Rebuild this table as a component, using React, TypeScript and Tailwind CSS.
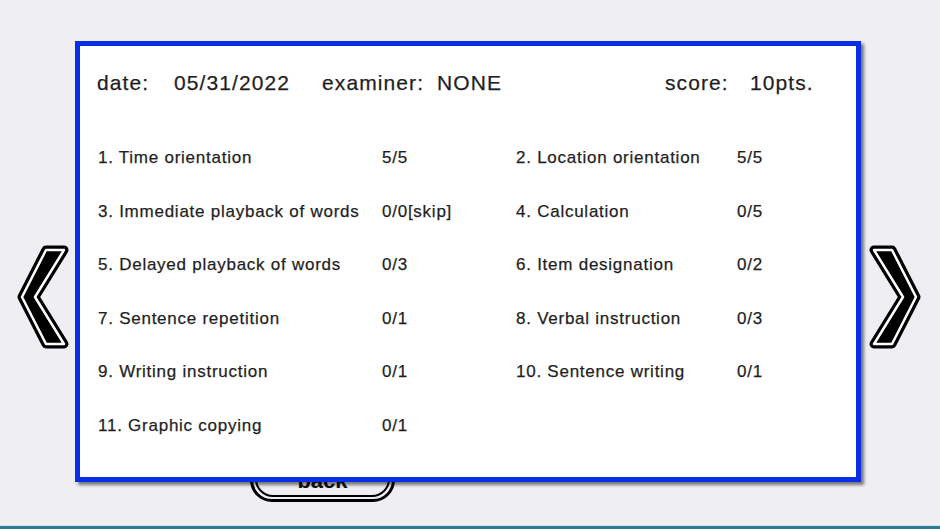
import React from "react";

const items: [string, string][] = [
    ["1. Time orientation", "5/5"],
    ["2. Location orientation", "5/5"],
    ["3. Immediate playback of words", "0/0[skip]"],
    ["4. Calculation", "0/5"],
    ["5. Delayed playback of words", "0/3"],
    ["6. Item designation", "0/2"],
    ["7. Sentence repetition", "0/1"],
    ["8. Verbal instruction", "0/3"],
    ["9. Writing instruction", "0/1"],
    ["10. Sentence writing", "0/1"],
    ["11. Graphic copying", "0/1"],
];

function Chevron({ flip }: { flip?: boolean }) {
    // double-outlined chevron, drawn pointing left
    const pts = "29,5 47,5 18,52 47,99 29,99 5,52";
    return (
        <svg width="54" height="104" viewBox="0 0 54 104" className={flip ? "-scale-x-100" : ""}>
            <polygon points={pts} fill="#000" stroke="#000" strokeWidth="9" strokeLinejoin="round" />
            <polygon points={pts} fill="none" stroke="#fff" strokeWidth="2.5" strokeLinejoin="round" />
        </svg>
    );
}

export default function App() {
    return (
        <div className="relative w-[940px] h-[529px] bg-[#efeef3] overflow-hidden flex flex-col font-['Liberation_Sans',Arial,sans-serif]">
            {/* page underneath */}
            <div className="flex-1 flex flex-col">
                <div className="flex justify-between pl-[17px] pr-[19px] pt-[245px]">
                    <Chevron />
                    <Chevron flip />
                </div>
                <div className="pl-[250px] mt-[103px]">
                    <div className="w-[145px] h-[50px] rounded-[22px] border-[3px] border-black p-[2px]">
                        <div className="w-full h-full rounded-[18px] border-[2px] border-black flex items-end justify-center pb-[3px]">
                            <span className="text-[22px] font-bold text-[#111] leading-none">back</span>
                        </div>
                    </div>
                </div>
            </div>
            <div className="h-[1px] bg-[#d6e3ea]" />
            <div className="h-[3px] bg-[#2b7b95]" />

            {/* result modal */}
            <div className="absolute left-[75px] top-[41px] w-[786px] h-[441px] bg-white border-[5px] border-[#0a2de6] shadow-[3px_3px_3px_rgba(0,0,0,0.5)] text-[#1f1f1f] [-webkit-text-stroke:0.25px_#1f1f1f]">
                <div className="flex items-center h-[28px] mt-[23px] pl-[17px] text-[21px] tracking-[1.1px]">
                    <span className="w-[77px]">date:</span>
                    <span className="w-[148px]">05/31/2022</span>
                    <span className="w-[115px]">examiner:</span>
                    <span className="w-[228px]">NONE</span>
                    <span className="w-[85px]">score:</span>
                    <span>10pts.</span>
                </div>
                <div className="mt-[34px] pl-[18px] grid grid-cols-[284px_134px_221px_1fr] auto-rows-[53.6px] items-center text-[17px] tracking-[0.75px]">
                    {items.map(([label, value]) => (
                        <React.Fragment key={label}>
                            <span>{label}</span>
                            <span>{value}</span>
                        </React.Fragment>
                    ))}
                </div>
            </div>
        </div>
    );
}
